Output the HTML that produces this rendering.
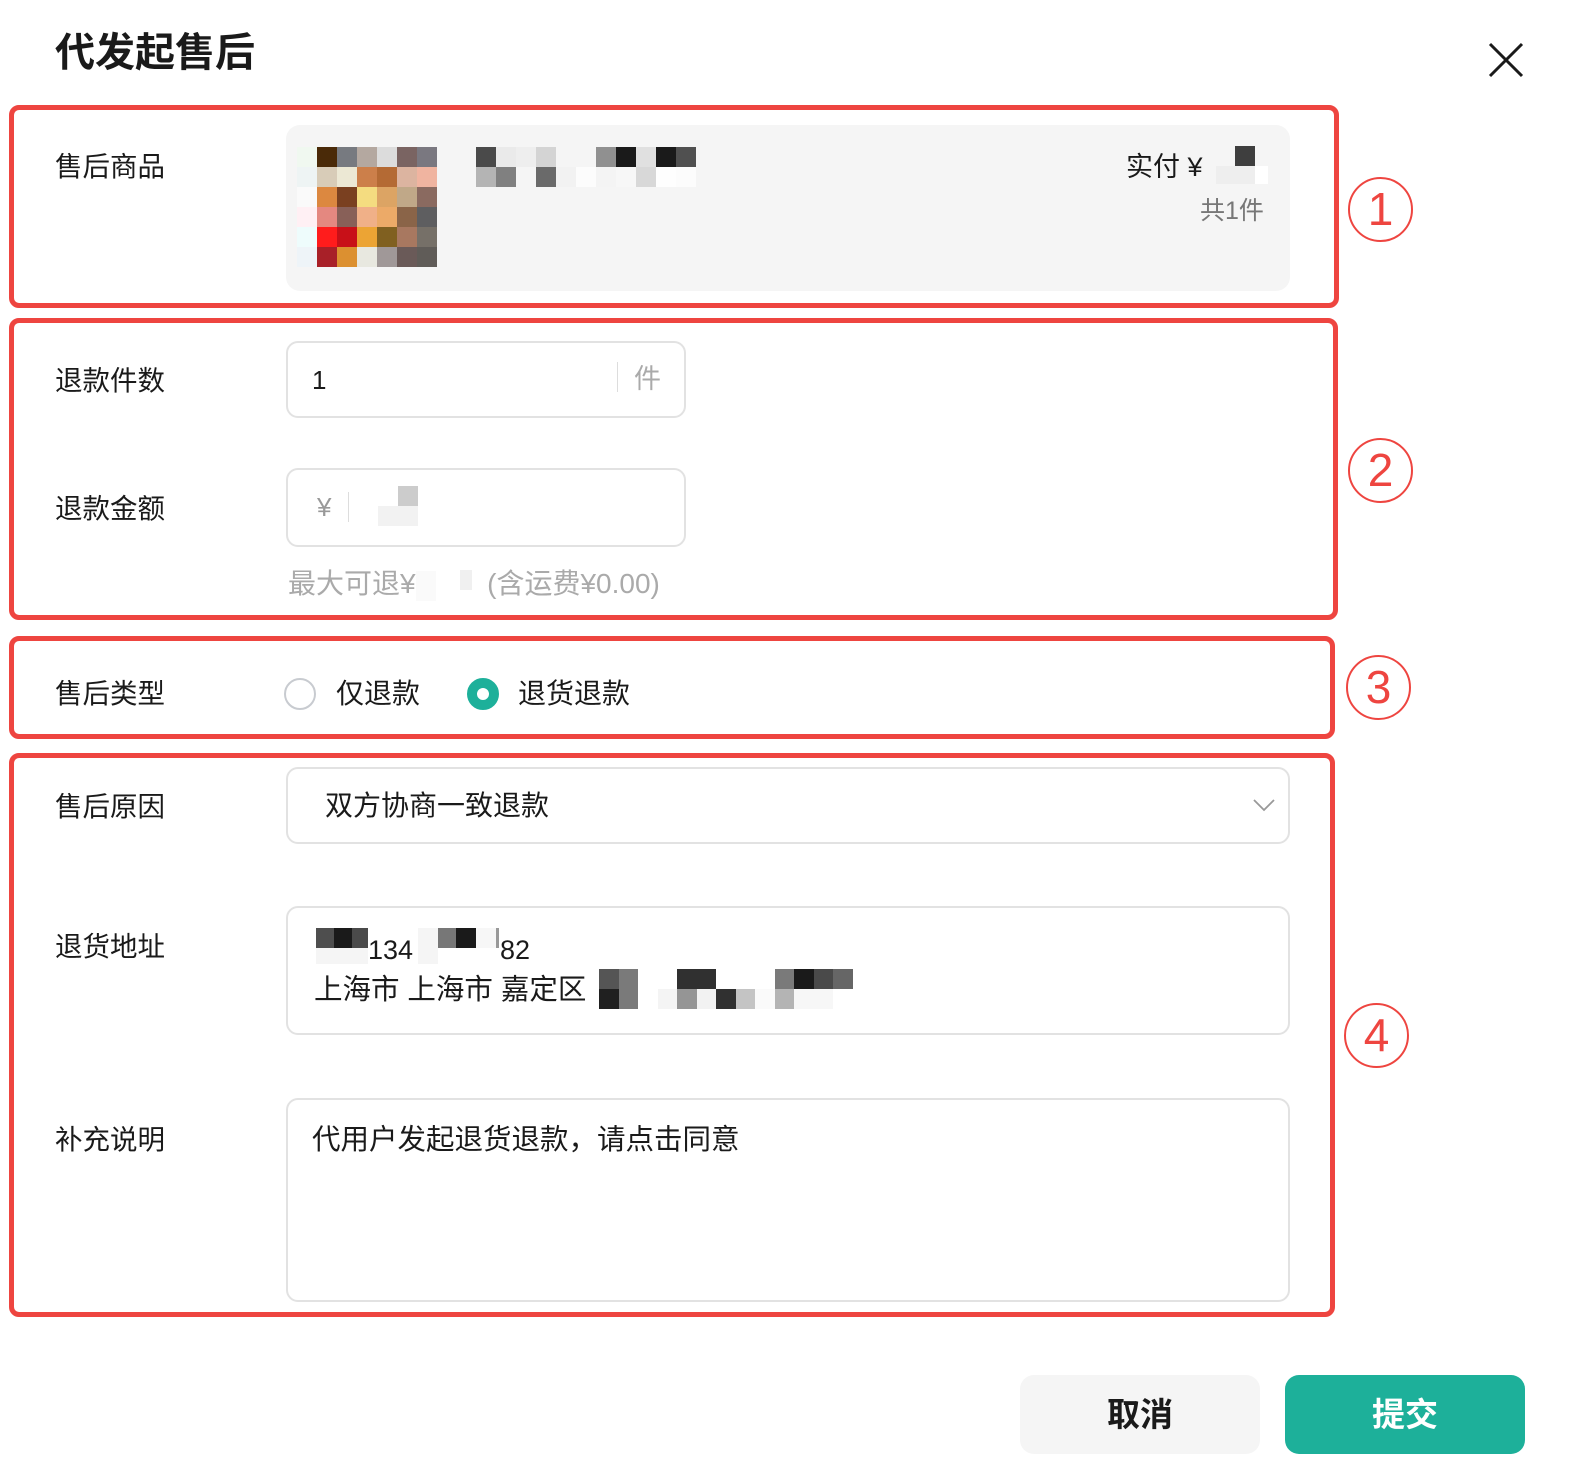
<!DOCTYPE html>
<html><head><meta charset="utf-8"><style>
*{margin:0;padding:0;box-sizing:border-box}
body{width:1580px;height:1478px;background:#fff;position:relative;overflow:hidden;font-family:"Liberation Sans","Noto Sans CJK SC",sans-serif;color:#1a1a1a}
.a{position:absolute}
.t{position:absolute;white-space:nowrap;line-height:1}
.red{position:absolute;border:5px solid #ee4540;border-radius:10px}
.circ{position:absolute;width:65px;height:65px;border:2.5px solid #ee4540;border-radius:50%;color:#ee4540;font-weight:normal;font-size:46px;text-align:center;line-height:60px}
.lbl{position:absolute;left:55px;font-size:27.5px;line-height:1;white-space:nowrap}
.box{position:absolute;border:2px solid #e2e2e2;border-radius:12px;background:#fff}
.px{position:absolute;width:20px;height:20px}
</style></head><body>
<div class="t" style="left:55px;top:33px;font-size:40px;font-weight:bold">代发起售后</div>
<svg class="a" style="left:1487px;top:41px" width="38" height="38" viewBox="0 0 38 38"><path d="M3 3L35 35M35 3L3 35" stroke="#1a1a1a" stroke-width="3"/></svg>

<div class="red" style="left:9px;top:105px;width:1330px;height:203px"></div>
<div class="red" style="left:9px;top:318px;width:1329px;height:302px"></div>
<div class="red" style="left:9px;top:636px;width:1326px;height:103px"></div>
<div class="red" style="left:9px;top:753px;width:1326px;height:564px"></div>
<div class="circ" style="left:1348px;top:177px">1</div>
<div class="circ" style="left:1348px;top:438px">2</div>
<div class="circ" style="left:1346px;top:655px">3</div>
<div class="circ" style="left:1344px;top:1003px">4</div>

<div class="lbl" style="top:153px">售后商品</div>
<div class="a" style="left:286px;top:125px;width:1004px;height:166px;background:#f5f5f5;border-radius:14px"></div>
<div id="grid" class="a" style="left:297px;top:147px;width:140px;height:120px"></div>
<div id="ttl" class="a" style="left:476px;top:147px;width:240px;height:40px"></div>
<div class="t" style="left:1126px;top:154px;font-size:27px">实付 ¥</div>
<div class="a" style="left:1235px;top:146px;width:20px;height:20px;background:#3e3e3e"></div>
<div class="a" style="left:1216px;top:166px;width:39px;height:18px;background:#eee"></div>
<div class="a" style="left:1255px;top:166px;width:13px;height:18px;background:#fff"></div>
<div class="t" style="left:1200px;top:199px;font-size:25px;color:#777">共1件</div>

<div class="lbl" style="top:367px">退款件数</div>
<div class="box" style="left:286px;top:341px;width:400px;height:77px"></div>
<div class="t" style="left:312px;top:367px;font-size:26px">1</div>
<div class="a" style="left:617px;top:362px;width:1px;height:30px;background:#ddd"></div>
<div class="t" style="left:634px;top:366px;font-size:27px;color:#aaa">件</div>

<div class="lbl" style="top:495px">退款金额</div>
<div class="box" style="left:286px;top:468px;width:400px;height:79px"></div>
<div class="t" style="left:317px;top:494px;font-size:26px;color:#999">¥</div>
<div class="a" style="left:348px;top:492px;width:1px;height:30px;background:#ddd"></div>
<div class="a" style="left:398px;top:486px;width:20px;height:20px;background:#ccc"></div>
<div class="a" style="left:378px;top:506px;width:40px;height:20px;background:#f2f2f2"></div>
<div class="t" style="left:288px;top:570px;font-size:28px;color:#aaa">最大可退¥<span style="display:inline-block;width:20px;height:30px;background:#fafafa;vertical-align:middle"></span><span style="display:inline-block;width:24px"></span><span style="display:inline-block;width:12px;height:20px;background:#f0f0f0;vertical-align:top"></span> &nbsp;(含运费¥0.00)</div>

<div class="lbl" style="top:680px">售后类型</div>
<div class="a" style="left:284px;top:678px;width:32px;height:32px;border:2px solid #c8cbd0;border-radius:50%"></div>
<div class="t" style="left:336px;top:680px;font-size:28px">仅退款</div>
<div class="a" style="left:467px;top:678px;width:32px;height:32px;border:10px solid #1db09a;border-radius:50%;background:#fff"></div>
<div class="t" style="left:518px;top:680px;font-size:28px">退货退款</div>

<div class="lbl" style="top:793px">售后原因</div>
<div class="box" style="left:286px;top:767px;width:1004px;height:77px"></div>
<div class="t" style="left:325px;top:792px;font-size:28px">双方协商一致退款</div>
<svg class="a" style="left:1252px;top:797px" width="24" height="16" viewBox="0 0 24 16"><path d="M2 3L12 13L22 3" fill="none" stroke="#999" stroke-width="1.8"/></svg>

<div class="lbl" style="top:933px">退货地址</div>
<div class="box" style="left:286px;top:906px;width:1004px;height:129px"></div>
<div class="a" style="left:316px;top:928px;width:20px;height:20px;background:#4e4e4e"></div>
<div class="a" style="left:334px;top:928px;width:20px;height:20px;background:#1a1a1a"></div>
<div class="a" style="left:352px;top:928px;width:16px;height:20px;background:#4a4a4a"></div>
<div class="a" style="left:316px;top:948px;width:52px;height:16px;background:#f5f5f5"></div>
<div class="t" style="left:368px;top:937px;font-size:27px">134</div>
<div class="a" style="left:418px;top:928px;width:20px;height:36px;background:#f5f5f5"></div>
<div class="a" style="left:438px;top:928px;width:20px;height:20px;background:#777"></div>
<div class="a" style="left:456px;top:928px;width:20px;height:20px;background:#1a1a1a"></div>
<div class="a" style="left:476px;top:928px;width:20px;height:20px;background:#f7f7f7"></div>
<div class="a" style="left:496px;top:928px;width:3px;height:20px;background:#999"></div>
<div class="t" style="left:500px;top:937px;font-size:27px">82</div>
<div class="t" style="left:314px;top:976px;font-size:28.5px">上海市 上海市 嘉定区</div>
<div id="addr" class="a" style="left:599px;top:969px;width:240px;height:40px"></div>

<div class="lbl" style="top:1126px">补充说明</div>
<div class="box" style="left:286px;top:1098px;width:1004px;height:204px"></div>
<div class="t" style="left:312px;top:1126px;font-size:28.5px">代用户发起退货退款，请点击同意</div>

<div class="a" style="left:1020px;top:1375px;width:240px;height:79px;background:#f5f5f5;border-radius:14px;text-align:center;line-height:79px;font-size:33px;font-weight:bold">取消</div>
<div class="a" style="left:1285px;top:1375px;width:240px;height:79px;background:#1db09a;border-radius:14px;text-align:center;line-height:79px;font-size:33px;font-weight:bold;color:#fff">提交</div>

<script>
function fill(id,rows,w){var el=document.getElementById(id),h='';rows.forEach(function(r,i){r.forEach(function(c,j){if(c)h+='<div class="px" style="left:'+(j*w)+'px;top:'+(i*20)+'px;width:'+w+'px;background:#'+c+'"></div>'})});el.innerHTML=h}
fill('grid',[
['f0f8f0','4a2a08','777a80','b4a8a0','dcdcdc','7a6462','7a7880'],
['eef4f4','d8ccb8','ece8d4','cc7f4a','b46a34','dcb4a0','f0b4a0'],
['fafafa','dc8840','7a4020','f4dc80','dca464','c0a888','8a6a60'],
['fff0f4','e48880','886058','f0b088','ecaa68','8a6448','5e5e60'],
['eefcfc','ff1c1c','c81018','eca434','806020','a87860','767068'],
['eef4f8','a82028','dc9030','e8e8e0','a09898','6a5a58','605c58']],20);
fill('ttl',[
['4a4a4a','eaeaea','eeeeee','d4d4d4','','','909090','1a1a1a','e0e0e0','1a1a1a','505050'],
['b4b4b4','808080','','6a6a6a','f2f2f2','fcfcfc','f4f4f4','f7f7f7','d8d8d8','fefefe','fcfcfc']],20);
fill('addr',[
['555555','7a7a7a','','','303030','303030','','','','7a7a7a','1a1a1a','4a4a4a','666666'],
['202020','7a7a7a','','f4f4f4','959595','f2f2f2','303030','c4c4c4','fafafa','b4b4b4','f7f7f7','f7f7f7','']],19.5);
</script>
</body></html>
